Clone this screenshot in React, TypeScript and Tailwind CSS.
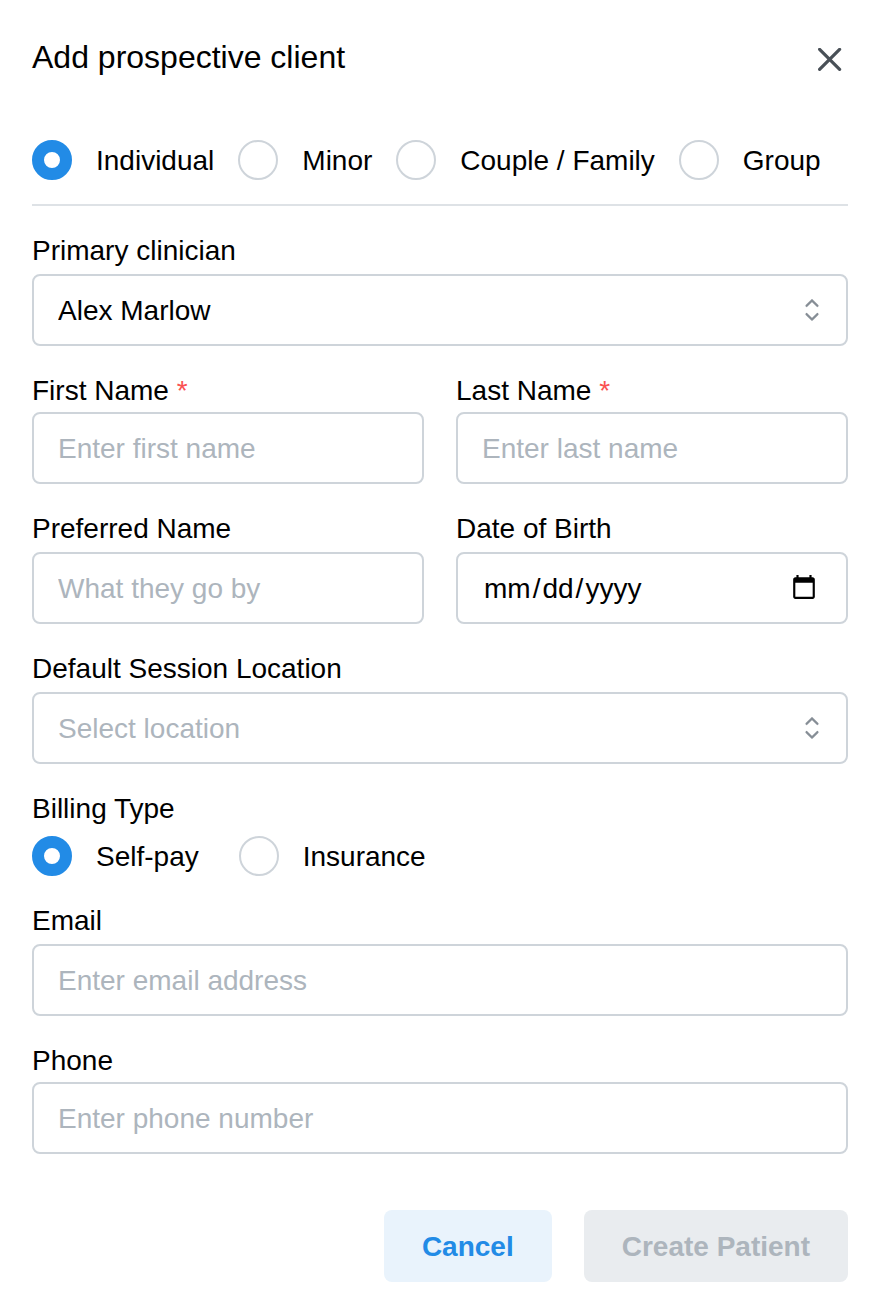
import { useState } from "react";
import type { InputHTMLAttributes, ReactNode } from "react";

const boxClass =
  "block h-[72px] w-full rounded-lg border-2 border-[#ced4da] bg-white px-6 pt-0.5 text-[28px] outline-none placeholder:text-[#adb5bd] focus:border-[#228be6]";

const dateClass =
  "[&::-webkit-datetime-edit-month-field]:px-0.5 [&::-webkit-datetime-edit-day-field]:px-0.5 [&::-webkit-datetime-edit-year-field]:px-0.5 [&::-webkit-calendar-picker-indicator]:mr-0.5 [&::-webkit-calendar-picker-indicator]:mb-0.5";

type FieldProps = {
  id: string;
  label: string;
  required?: boolean;
  tight?: boolean;
  children: ReactNode;
};

function Field({ id, label, required, tight, children }: FieldProps) {
  return (
    <div className={tight ? "flex min-w-0 flex-col" : "flex min-w-0 flex-col gap-0.5"}>
      <label htmlFor={id} className="leading-[42px]">
        {label}
        {required && <span className="text-[#fa5252]"> *</span>}
      </label>
      {children}
    </div>
  );
}

function TextBox(props: InputHTMLAttributes<HTMLInputElement>) {
  return <input className={`${boxClass} ${dateClass} text-black`} {...props} />;
}

type SelectBoxProps = {
  id: string;
  options: string[];
  placeholder?: string;
};

function SelectBox({ id, options, placeholder }: SelectBoxProps) {
  const [value, setValue] = useState(placeholder ? "" : options[0]);
  return (
    <div className="relative">
      <select
        id={id}
        value={value}
        onChange={(e) => setValue(e.target.value)}
        className={`${boxClass} appearance-none ${value ? "text-black" : "text-[#adb5bd]"}`}
      >
        {placeholder && (
          <option value="" disabled>
            {placeholder}
          </option>
        )}
        {options.map((o) => (
          <option key={o} value={o}>
            {o}
          </option>
        ))}
      </select>
      <svg
        viewBox="0 0 15 15"
        fill="#868e96"
        stroke="#868e96"
        strokeWidth="0.1"
        aria-hidden="true"
        className="pointer-events-none absolute inset-y-0 right-[18px] my-auto size-9"
      >
        <path
          fillRule="evenodd"
          clipRule="evenodd"
          d="M4.93179 5.43179C4.75605 5.60753 4.75605 5.89245 4.93179 6.06819C5.10753 6.24392 5.39245 6.24392 5.56819 6.06819L7.49999 4.13638L9.43179 6.06819C9.60753 6.24392 9.89245 6.24392 10.0682 6.06819C10.2439 5.89245 10.2439 5.60753 10.0682 5.43179L7.81819 3.18179C7.73379 3.0974 7.61933 3.04999 7.49999 3.04999C7.38064 3.04999 7.26618 3.0974 7.18179 3.18179L4.93179 5.43179ZM10.0682 9.56819C10.2439 9.39245 10.2439 9.10753 10.0682 8.93179C9.89245 8.75606 9.60753 8.75606 9.43179 8.93179L7.49999 10.8636L5.56819 8.93179C5.39245 8.75606 5.10753 8.75606 4.93179 8.93179C4.75605 9.10753 4.75605 9.39245 4.93179 9.56819L7.18179 11.8182C7.26618 11.9026 7.38064 11.95 7.49999 11.95C7.61933 11.95 7.73379 11.9026 7.81819 11.8182L10.0682 9.56819Z"
        />
      </svg>
    </div>
  );
}

function Radio({ name, label, defaultChecked }: { name: string; label: string; defaultChecked?: boolean }) {
  return (
    <label className="flex h-10 items-center gap-6">
      <input
        type="radio"
        name={name}
        defaultChecked={defaultChecked}
        className="size-10 shrink-0 appearance-none rounded-full border-2 border-[#ced4da] bg-white checked:border-12 checked:border-[#228be6]"
      />
      <span className="pt-0.5 leading-[38px]">{label}</span>
    </label>
  );
}

export default function App() {
  return (
    <main className="bg-white p-8 font-['Liberation_Sans',Arial,sans-serif] text-[28px] text-black">
      <header className="flex h-14 items-start justify-between">
        <h1 className="text-[32px] leading-[50px]">Add prospective client</h1>
        <button type="button" aria-label="Close" className="flex h-14 w-9 items-center justify-center">
          <svg
            viewBox="0 0 24 24"
            className="size-6"
            fill="none"
            stroke="#495057"
            strokeWidth="3.2"
            strokeLinecap="round"
            aria-hidden="true"
          >
            <path d="M1.6 1.4L21.6 21.4M21.6 1.4L1.6 21.4" />
          </svg>
        </button>
      </header>

      <form className="mt-[52px] flex flex-col gap-6" onSubmit={(e) => e.preventDefault()}>
        <div role="radiogroup" aria-label="Client type" className="flex flex-wrap gap-6">
          <Radio name="client-type" label="Individual" defaultChecked />
          <Radio name="client-type" label="Minor" />
          <Radio name="client-type" label="Couple / Family" />
          <Radio name="client-type" label="Group" />
        </div>

        <hr className="border-t-2 border-[#dee2e6]" />

        <Field id="clinician" label="Primary clinician">
          <SelectBox id="clinician" options={["Alex Marlow"]} />
        </Field>

        <div className="grid grid-cols-2 gap-x-8 gap-y-6">
          <Field id="first-name" label="First Name" required tight>
            <TextBox id="first-name" placeholder="Enter first name" />
          </Field>
          <Field id="last-name" label="Last Name" required tight>
            <TextBox id="last-name" placeholder="Enter last name" />
          </Field>
          <Field id="preferred-name" label="Preferred Name">
            <TextBox id="preferred-name" placeholder="What they go by" />
          </Field>
          <Field id="birth-date" label="Date of Birth">
            <TextBox id="birth-date" type="date" />
          </Field>
        </div>

        <Field id="location" label="Default Session Location">
          <SelectBox id="location" placeholder="Select location" options={["Office", "Telehealth"]} />
        </Field>

        <fieldset>
          <legend className="leading-[42px]">Billing Type</legend>
          <div className="mt-1.5 flex flex-wrap gap-10">
            <Radio name="billing" label="Self-pay" defaultChecked />
            <Radio name="billing" label="Insurance" />
          </div>
        </fieldset>

        <Field id="email" label="Email">
          <TextBox id="email" type="email" placeholder="Enter email address" />
        </Field>

        <Field id="phone" label="Phone" tight>
          <TextBox id="phone" type="tel" placeholder="Enter phone number" />
        </Field>

        <div className="mt-8 flex justify-end gap-8">
          <button type="button" className="h-[72px] rounded-lg bg-[#e9f3fc] px-[38px] pt-0.5 font-bold text-[#228be6]">
            Cancel
          </button>
          <button
            type="submit"
            disabled
            className="h-[72px] rounded-lg bg-[#e9ecef] px-[38px] pt-0.5 font-bold text-[#adb5bd]"
          >
            Create Patient
          </button>
        </div>
      </form>
    </main>
  );
}
